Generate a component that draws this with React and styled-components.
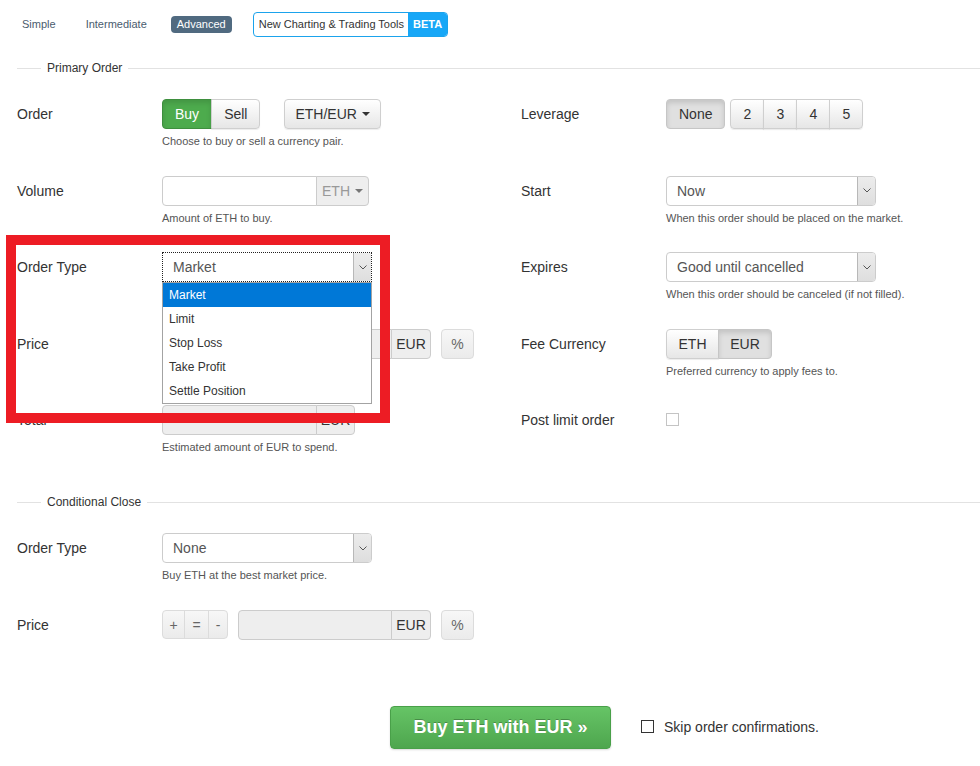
import React from 'react';
import styled, { createGlobalStyle, css } from 'styled-components';

const GlobalStyle = createGlobalStyle`
  html, body {
    margin: 0;
    padding: 0;
    background: #fff;
  }
  body {
    font-family: "Liberation Sans", Arial, sans-serif;
    color: #333;
  }
`;

const Page = styled.div`
  position: relative;
  width: 980px;
  min-height: 766px;
  padding: 12px 0 0 17px;
  box-sizing: border-box;
  overflow: hidden;
`;

const Nav = styled.div`
  display: flex;
  align-items: center;
  gap: 18px;
  height: 25px;
  margin-left: -1px;
`;

const NavLink = styled.span`
  padding: 2px 6px;
  font-size: 11px;
  line-height: 13px;
  border-radius: 4px;
  color: ${(p) => (p.active ? '#fff' : '#4a5c6e')};
  background: ${(p) => (p.active ? '#506a80' : 'transparent')};
`;

const BetaBox = styled.div`
  display: flex;
  margin-left: 3px;
  height: 25px;
  box-sizing: border-box;
  border: 1px solid #1ba3ec;
  border-radius: 4px;
  overflow: hidden;
  font-size: 11px;
  line-height: 23px;
`;

const BetaText = styled.span`
  padding: 0 4px 0 5px;
  color: #333;
`;

const BetaTag = styled.span`
  padding: 0 5px;
  background: #17a7f7;
  color: #fff;
  font-weight: bold;
`;

const Legend = styled.div`
  display: flex;
  align-items: center;
  height: 14px;
  margin-top: ${(p) => p.top}px;
  font-size: 12px;
  color: #333;

  &::before,
  &::after {
    content: '';
    height: 1px;
    background: #e2e2e2;
  }
  &::before {
    width: 24px;
  }
  &::after {
    flex: 1;
  }
`;

const LegendText = styled.span`
  padding: 0 6px;
`;

const Columns = styled.div`
  display: grid;
  grid-template-columns: 504px 1fr;
  margin-top: 24px;
`;

const Column = styled.div`
  display: flex;
  flex-direction: column;
`;

const FormRow = styled.div`
  display: flex;
  align-items: flex-start;
  height: 76.5px;
`;

const Label = styled.div`
  width: 145px;
  flex-shrink: 0;
  font-size: 14px;
  line-height: 30px;
  color: #333;
`;

const Field = styled.div`
  display: flex;
  flex-direction: column;
`;

const Controls = styled.div`
  display: flex;
  align-items: center;
  gap: ${(p) => p.gap || 0}px;
`;

const Help = styled.div`
  margin-top: 6px;
  font-size: 11px;
  line-height: 13px;
  color: #555;
`;

const BtnGroup = styled.div`
  display: inline-flex;
  visibility: ${(p) => (p.covered ? 'hidden' : 'visible')};

  & > * + * {
    margin-left: -1px;
  }
  & > *:not(:first-child):not(:last-child) {
    border-radius: 0;
  }
  & > *:first-child:not(:last-child) {
    border-top-right-radius: 0;
    border-bottom-right-radius: 0;
  }
  & > *:last-child:not(:first-child) {
    border-top-left-radius: 0;
    border-bottom-left-radius: 0;
  }
`;

const Btn = styled.div`
  display: inline-flex;
  align-items: center;
  justify-content: center;
  height: ${(p) => p.h || 30}px;
  box-sizing: border-box;
  padding: 0 ${(p) => (p.w ? 0 : p.pad || 12)}px;
  width: ${(p) => (p.w ? `${p.w}px` : 'auto')};
  font-size: 14px;
  color: #333;
  border: 1px solid #cfcfcf;
  border-radius: 4px;
  background: linear-gradient(to bottom, #fff 0%, #e6e6e6 100%);
  box-shadow: inset 0 1px 0 rgba(255, 255, 255, 0.15), 0 1px 1px rgba(0, 0, 0, 0.075);

  ${(p) =>
    p.pressed &&
    css`
      background: #e0e0e0;
      border-color: #c6c6c6;
      box-shadow: inset 0 3px 5px rgba(0, 0, 0, 0.125);
    `}

  ${(p) =>
    p.success &&
    css`
      background: #4dab4d;
      border-color: #3e8f3e;
      color: #fff;
      box-shadow: inset 0 3px 5px rgba(0, 0, 0, 0.125);
    `}

  ${(p) =>
    p.muted &&
    css`
      background: linear-gradient(to bottom, #f7f7f7 0%, #ebebeb 100%);
      border-color: #dcdcdc;
      color: #666;
      box-shadow: none;
    `}
`;

const Caret = styled.span`
  display: inline-block;
  width: 0;
  height: 0;
  margin-left: 5px;
  border-top: 4px solid ${(p) => p.color || '#333'};
  border-left: 4px solid transparent;
  border-right: 4px solid transparent;
`;

const SelectBox = styled.div`
  position: relative;
  display: flex;
  align-items: center;
  width: ${(p) => p.w}px;
  height: 30px;
  box-sizing: border-box;
  padding-left: 10px;
  font-size: 14px;
  color: #555;
  background: #fff;
  border: 1px solid #ccc;
  border-radius: 4px;

  ${(p) =>
    p.focused &&
    css`
      border: 1px dotted #222;
      border-radius: 0;
    `}
`;

const SelectArrow = styled.span`
  display: flex;
  align-items: center;
  justify-content: center;
  margin-left: auto;
  width: 17px;
  align-self: stretch;
  background: linear-gradient(to bottom, #ececec, #dedede);
  border-left: 1px solid #b8b8b8;
  border-top-right-radius: ${(p) => (p.focused ? 0 : 3)}px;
  border-bottom-right-radius: ${(p) => (p.focused ? 0 : 3)}px;
`;

const OptionList = styled.div`
  position: absolute;
  top: calc(100% + 1px);
  left: -1px;
  right: -1px;
  z-index: 5;
  background: #fff;
  border: 1px solid #a3a3a3;
`;

const Option = styled.div`
  height: 24px;
  line-height: 25px;
  padding-left: 6px;
  font-size: 12px;
  color: ${(p) => (p.selected ? '#fff' : '#333')};
  background: ${(p) => (p.selected ? '#0078d7' : '#fff')};
`;

const InputGroup = styled.div`
  display: inline-flex;
`;

const TextInput = styled.div`
  width: ${(p) => p.w}px;
  height: 30px;
  box-sizing: border-box;
  border: 1px solid #ccc;
  border-radius: 4px 0 0 4px;
  background: ${(p) => (p.disabled ? '#eee' : '#fff')};
`;

const Addon = styled.div`
  display: flex;
  align-items: center;
  justify-content: center;
  width: ${(p) => p.w}px;
  height: 30px;
  margin-left: -1px;
  box-sizing: border-box;
  border: 1px solid #ccc;
  border-radius: 0 4px 4px 0;
  background: #eee;
  font-size: 14px;
  color: ${(p) => p.color || '#333'};
`;

const CheckBox = styled.span`
  display: inline-block;
  width: ${(p) => p.size}px;
  height: ${(p) => p.size}px;
  box-sizing: border-box;
  border: 1px solid ${(p) => p.border};
  background: #fff;
  margin-top: ${(p) => p.top || 0}px;
`;

const SubmitRow = styled.div`
  display: flex;
  align-items: center;
  margin-top: 20px;
  padding-left: 373px;
`;

const SubmitButton = styled.div`
  display: flex;
  align-items: center;
  justify-content: center;
  width: 221px;
  height: 43px;
  box-sizing: border-box;
  border: 1px solid #49a049;
  border-radius: 4px;
  background: linear-gradient(to bottom, #66c466 0%, #4ea64e 100%);
  box-shadow: 0 1px 2px rgba(0, 0, 0, 0.15);
  color: #fff;
  font-size: 18px;
  font-weight: bold;
  text-shadow: 0 -1px 0 rgba(0, 0, 0, 0.25);
`;

const SkipLabel = styled.label`
  display: flex;
  align-items: center;
  gap: 10px;
  margin-left: 30px;
  margin-top: -2px;
  font-size: 14px;
  color: #333;
`;

const Highlight = styled.div`
  position: absolute;
  left: 6px;
  top: 235px;
  width: 384px;
  height: 188px;
  box-sizing: border-box;
  border: 10px solid #ed1c24;
  pointer-events: none;
  z-index: 10;
`;

const Chevron = () => (
  <svg width="8" height="5" viewBox="0 0 8 5">
    <path d="M0.5 0.5 L4 4 L7.5 0.5" fill="none" stroke="#555" strokeWidth="1" />
  </svg>
);

const Select = ({ w, value, focused, children }) => (
  <SelectBox w={w} focused={focused}>
    {value}
    <SelectArrow focused={focused}>
      <Chevron />
    </SelectArrow>
    {children}
  </SelectBox>
);

// covered: the +/=/- group sits under the open dropdown in the primary order
const PriceControls = ({ covered }) => (
  <Controls gap={10}>
    <BtnGroup covered={covered}>
      <Btn muted h={29} w={23}>+</Btn>
      <Btn muted h={29} w={25}>=</Btn>
      <Btn muted h={29} w={20}>-</Btn>
    </BtnGroup>
    <InputGroup>
      <TextInput w={154} disabled />
      <Addon w={40}>EUR</Addon>
    </InputGroup>
    <Btn muted w={33}>%</Btn>
  </Controls>
);

const orderTypes = ['Market', 'Limit', 'Stop Loss', 'Take Profit', 'Settle Position'];

const App = () => (
  <>
    <GlobalStyle />
    <Page>
      <Nav>
        <NavLink>Simple</NavLink>
        <NavLink>Intermediate</NavLink>
        <NavLink active>Advanced</NavLink>
        <BetaBox>
          <BetaText>New Charting &amp; Trading Tools</BetaText>
          <BetaTag>BETA</BetaTag>
        </BetaBox>
      </Nav>

      <Legend top={24}>
        <LegendText>Primary Order</LegendText>
      </Legend>
      <Columns>
        <Column>
          <FormRow>
            <Label>Order</Label>
            <Field>
              <Controls gap={24}>
                <BtnGroup>
                  <Btn success>Buy</Btn>
                  <Btn>Sell</Btn>
                </BtnGroup>
                <Btn pad={10}>
                  ETH/EUR
                  <Caret />
                </Btn>
              </Controls>
              <Help>Choose to buy or sell a currency pair.</Help>
            </Field>
          </FormRow>
          <FormRow>
            <Label>Volume</Label>
            <Field>
              <InputGroup>
                <TextInput w={155} />
                <Addon w={53} color="#999">
                  ETH
                  <Caret color="#777" />
                </Addon>
              </InputGroup>
              <Help>Amount of ETH to buy.</Help>
            </Field>
          </FormRow>
          <FormRow>
            <Label>Order Type</Label>
            <Field>
              <Select w={210} value="Market" focused>
                <OptionList>
                  {orderTypes.map((t, i) => (
                    <Option key={t} selected={i === 0}>
                      {t}
                    </Option>
                  ))}
                </OptionList>
              </Select>
            </Field>
          </FormRow>
          <FormRow>
            <Label>Price</Label>
            <Field>
              <PriceControls covered />
            </Field>
          </FormRow>
          <FormRow>
            <Label>Total</Label>
            <Field>
              <InputGroup>
                <TextInput w={155} disabled />
                <Addon w={39}>EUR</Addon>
              </InputGroup>
              <Help>Estimated amount of EUR to spend.</Help>
            </Field>
          </FormRow>
        </Column>

        <Column>
          <FormRow>
            <Label>Leverage</Label>
            <Field>
              <Controls gap={5}>
                <Btn pressed>None</Btn>
                <BtnGroup>
                  <Btn w={34}>2</Btn>
                  <Btn w={34}>3</Btn>
                  <Btn w={34}>4</Btn>
                  <Btn w={34}>5</Btn>
                </BtnGroup>
              </Controls>
            </Field>
          </FormRow>
          <FormRow>
            <Label>Start</Label>
            <Field>
              <Select w={210} value="Now" />
              <Help>When this order should be placed on the market.</Help>
            </Field>
          </FormRow>
          <FormRow>
            <Label>Expires</Label>
            <Field>
              <Select w={210} value="Good until cancelled" />
              <Help>When this order should be canceled (if not filled).</Help>
            </Field>
          </FormRow>
          <FormRow>
            <Label>Fee Currency</Label>
            <Field>
              <BtnGroup>
                <Btn w={53}>ETH</Btn>
                <Btn w={54} pressed>EUR</Btn>
              </BtnGroup>
              <Help>Preferred currency to apply fees to.</Help>
            </Field>
          </FormRow>
          <FormRow>
            <Label>Post limit order</Label>
            <Field>
              <CheckBox size={13} border="#c4c4c4" top={8} />
            </Field>
          </FormRow>
        </Column>
      </Columns>

      <Legend top={13.5}>
        <LegendText>Conditional Close</LegendText>
      </Legend>
      <Columns>
        <Column>
          <FormRow>
            <Label>Order Type</Label>
            <Field>
              <Select w={210} value="None" />
              <Help>Buy ETH at the best market price.</Help>
            </Field>
          </FormRow>
          <FormRow>
            <Label>Price</Label>
            <Field>
              <PriceControls />
            </Field>
          </FormRow>
        </Column>
      </Columns>

      <SubmitRow>
        <SubmitButton>Buy ETH with EUR »</SubmitButton>
        <SkipLabel>
          <CheckBox size={13} border="#333" />
          Skip order confirmations.
        </SkipLabel>
      </SubmitRow>

      <Highlight />
    </Page>
  </>
);

export default App;
